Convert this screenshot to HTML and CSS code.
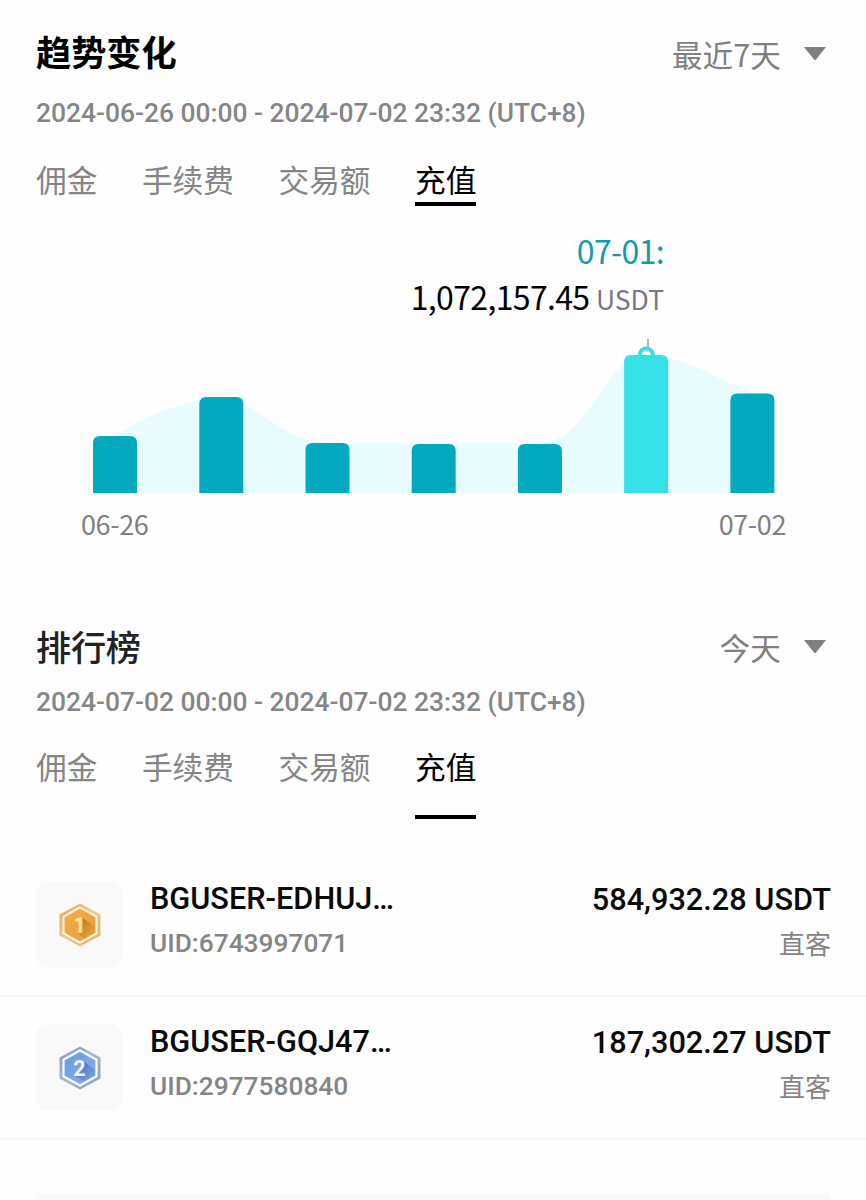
FILE: index.html
```html
<!DOCTYPE html>
<html lang="zh-CN">
<head>
<meta charset="utf-8">
<title>趋势变化</title>
<link rel="stylesheet" href="styles.css">
</head>
<body>
<main class="page">
  <section class="trend">
    <header class="head">
      <h2 class="title">趋势变化</h2>
      <div class="select">最近7天<svg class="caret" viewBox="0 0 22 14"><path d="M0 0H22L12 12.6Q11 13.6 10 12.6Z"/></svg></div>
    </header>
    <p class="range">2024-06-26 00:00 - 2024-07-02 23:32 (UTC+8)</p>
    <nav class="tabs">
      <span class="tab">佣金</span><span class="tab">手续费</span><span class="tab">交易额</span><span class="tab active">充值</span>
    </nav>
    <div class="readout">
      <div class="readout-date">07-01:</div>
      <div class="readout-value">1,072,157.45 <span class="unit">USDT</span></div>
    </div>
    <svg class="chart" viewBox="0 0 866 160">
      <path class="area" d="M115 101C142 82 185 64 221 64C260 64 280 108 327 108H540C590 108 603 22 646 20C684 20 715 44 752 57V158H115Z"/>
      <path class="bar" d="M93 158V108q0-7 7-7h30q7 0 7 7V158Z"/>
      <path class="bar" d="M199.300 158V69q0-7 7-7h30q7 0 7 7V158Z"/>
      <path class="bar" d="M305.500 158V115q0-7 7-7h30q7 0 7 7V158Z"/>
      <path class="bar" d="M411.700 158V116q0-7 7-7h30q7 0 7 7V158Z"/>
      <path class="bar" d="M517.900 158V116q0-7 7-7h30q7 0 7 7V158Z"/>
      <path class="bar selected" d="M624.100 158V27q0-7 7-7h30q7 0 7 7V158Z"/>
      <path class="bar" d="M730.400 158V65.500q0-7 7-7h30q7 0 7 7V158Z"/>
      <path class="needle" d="M648 4V12"/>
      <path class="marker" d="M639.800 20A6.500 6.500 0 0 1 652.800 20"/>
    </svg>
    <div class="axis"><span>06-26</span><span>07-02</span></div>
  </section>

  <section class="rank">
    <header class="head">
      <h2 class="title soft">排行榜</h2>
      <div class="select">今天<svg class="caret" viewBox="0 0 22 14"><path d="M0 0H22L12 12.6Q11 13.6 10 12.6Z"/></svg></div>
    </header>
    <p class="range">2024-07-02 00:00 - 2024-07-02 23:32 (UTC+8)</p>
    <nav class="tabs tall">
      <span class="tab">佣金</span><span class="tab">手续费</span><span class="tab">交易额</span><span class="tab active">充值</span>
    </nav>
    <ul class="list">
      <li class="row">
        <div class="badge">
          <svg class="medal" viewBox="0 0 42 44">
            <defs>
              <linearGradient id="gold" x1="0" y1="0" x2="1" y2="1"><stop offset="0" stop-color="#f6ac48"/><stop offset="1" stop-color="#e6a040"/></linearGradient>
              <linearGradient id="goldRim" x1="0" y1="0" x2="1" y2="1"><stop offset="0" stop-color="#dda65c"/><stop offset=".5" stop-color="#f2c78b"/><stop offset="1" stop-color="#e8ad5e"/></linearGradient>
              <linearGradient id="goldShade" x1="0" y1="0" x2="1" y2="1"><stop offset="0" stop-color="#a8690d"/><stop offset="1" stop-color="#e39a31" stop-opacity=".2"/></linearGradient>
            </defs>
            <path d="M21 .5L41.500 11.500V32.500L21 43.500L.5 32.500V11.500Z" fill="url(#goldRim)"/>
            <path d="M21 4.500L37.500 13.700V30.300L21 39.500L4.500 30.300V13.700Z" fill="url(#gold)" stroke="#fff6e4" stroke-width="2"/>
            <path d="M24 15L36 24V29.300L25 35.300L19 30L24 29Z" fill="url(#goldShade)"/>
            <text class="digit gold" x="20.500" y="29.500">1</text>
          </svg>
        </div>
        <div class="who"><div class="name">BGUSER-EDHUJ…</div><div class="uid">UID:6743997071</div></div>
        <div class="amount"><div class="sum">584,932.28 USDT</div><div class="kind">直客</div></div>
      </li>
      <li class="row">
        <div class="badge">
          <svg class="medal" viewBox="0 0 42 44">
            <defs>
              <linearGradient id="blue" x1="0" y1="0" x2="1" y2="1"><stop offset="0" stop-color="#6699e2"/><stop offset="1" stop-color="#8bb0eb"/></linearGradient>
              <linearGradient id="blueRim" x1="0" y1="0" x2="1" y2="1"><stop offset="0" stop-color="#7f9dce"/><stop offset=".5" stop-color="#a8b5d4"/><stop offset="1" stop-color="#789bd2"/></linearGradient>
              <linearGradient id="blueShade" x1="0" y1="0" x2="1" y2="1"><stop offset="0" stop-color="#315b9f"/><stop offset="1" stop-color="#6f98d8" stop-opacity=".3"/></linearGradient>
            </defs>
            <path d="M21 .5L41.500 11.500V32.500L21 43.500L.5 32.500V11.500Z" fill="url(#blueRim)"/>
            <path d="M21 4.500L37.500 13.700V30.300L21 39.500L4.500 30.300V13.700Z" fill="url(#blue)" stroke="#fff" stroke-width="2.200"/>
            <path d="M25 15.500L36 24V29.300L25 35.300L16 30L22 24Z" fill="url(#blueShade)"/>
            <text class="digit" x="20.500" y="29.500">2</text>
          </svg>
        </div>
        <div class="who"><div class="name">BGUSER-GQJ47…</div><div class="uid">UID:2977580840</div></div>
        <div class="amount"><div class="sum">187,302.27 USDT</div><div class="kind">直客</div></div>
      </li>
    </ul>
    <div class="footer-block"></div>
  </section>
</main>
</body>
</html>
```
FILE: styles.css
```css
* { box-sizing: border-box; }
body {
  margin: 0;
  background: #fefefe;
  color: #000;
  font-family: Roboto, "Noto Sans CJK SC", sans-serif;
}
.page { height: 1200px; overflow: hidden; }
.trend { height: 594px; }
.head {
  display: flex;
  justify-content: space-between;
  align-items: center;
  padding: 0 40px 0 36px;
}
.trend .head { height: 79px; padding-top: 28px; }
.rank .head { height: 74px; padding-top: 32px; }
.title {
  margin: 0;
  padding-bottom: 5px;
  font: 700 35.200px/50px "Noto Sans CJK SC", sans-serif;
}
.title.soft { padding-bottom: 3px; font-weight: 500; color: #222; letter-spacing: -0.300px; }
.select {
  display: flex;
  align-items: center;
  gap: 23px;
  color: #808080;
  font: 400 30.700px/46px "Noto Sans CJK SC", sans-serif;
}
.caret { width: 22px; height: 14px; fill: #7c7f7e; }
.range {
  margin: 0;
  height: 66px;
  padding: 0 36px;
  color: #858585;
  font-size: 26.400px;
  font-weight: 500;
  line-height: 68px;
  white-space: nowrap;
}
.rank .range { height: 64px; }
.tabs {
  display: flex;
  gap: 44.500px;
  height: 61px;
  padding: 0 36px;
  color: #858585;
  font: 400 30.700px/67px "Noto Sans CJK SC", sans-serif;
}
.tab.active { color: #000; border-bottom: 4px solid #000; }
.tabs.tall { height: 87px; }
.readout {
  width: 664px;
  padding-top: 21px;
  text-align: right;
  font: 400 32px/46px "Noto Sans CJK SC", sans-serif;
  letter-spacing: -0.650px;
}
.readout-date { color: #109ca9; }
.unit { color: #77768a; font-size: 26.500px; letter-spacing: 0; }
.chart { display: block; width: 866px; height: 160px; margin-top: 13px; }
.area { fill: #e8fcfd; }
.bar { fill: #03a9bf; }
.bar.selected { fill: #35e0e7; }
.needle { stroke: #9b9b9b; stroke-width: 1.500; }
.marker { fill: #fff; stroke: #35e0e7; stroke-width: 4; }
.axis {
  display: flex;
  justify-content: space-between;
  padding: 9px 80px 0 81px;
  color: #808080;
  font: 400 27px/40px "Noto Sans CJK SC", sans-serif;
  letter-spacing: -0.400px;
}
.list { margin: 35px 0 0; padding: 0; list-style: none; }
.row {
  display: flex;
  align-items: center;
  height: 143px;
  padding: 0 36px;
  border-bottom: 2px solid #f8f8f8;
}
.badge {
  display: flex;
  align-items: center;
  justify-content: center;
  width: 87px;
  height: 87px;
  border-radius: 13px;
  background: #f9f9f9;
}
.medal { width: 42px; height: 44px; }
.digit {
  fill: #eef5ff;
  font: 700 21.500px Roboto, sans-serif;
  text-anchor: middle;
}
.digit.gold { fill: #ffe39c; }
.who { margin-left: 27px; padding-bottom: 8px; flex: 1; }
.name, .sum { font-size: 30.700px; font-weight: 500; line-height: 44px; color: #0a0a0a; }
.uid { font-size: 26.300px; font-weight: 500; line-height: 44px; color: #858585; }
.amount { text-align: right; padding-bottom: 9px; margin-right: -1px; }
.kind { font: 400 26px/41px "Noto Sans CJK SC", sans-serif; color: #858585; }
.footer-block { height: 20px; margin: 53px 35px 0 36px; background: #f9f9f9; }
```
